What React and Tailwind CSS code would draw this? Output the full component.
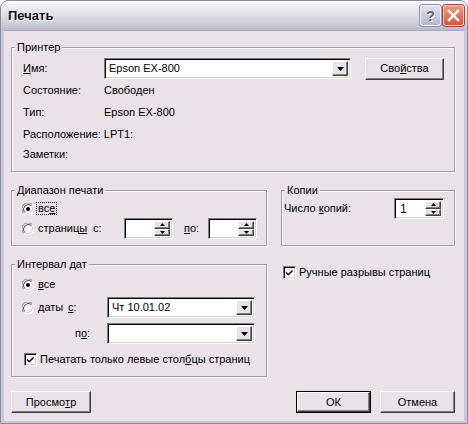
import React from "react";

// classic win-style bevels
const raised =
  "border border-t-white border-l-white border-b-[#404040] border-r-[#404040] shadow-[inset_-1px_-1px_0_#808080]";
const sunken =
  "border border-t-[#808080] border-l-[#808080] border-b-white border-r-white shadow-[inset_1px_1px_0_#000,inset_-1px_-1px_0_#d4d0c8]";

const Radio = ({ checked }) => (
  <svg width="12" height="12" viewBox="0 0 12 12" className="shrink-0">
    <circle cx="6" cy="6" r="5.5" fill="#fff" />
    <path d="M1.6 10.4 A6 6 0 0 1 10.4 1.6" fill="none" stroke="#808080" />
    <path d="M10.4 1.6 A6 6 0 0 1 1.6 10.4" fill="none" stroke="#fff" />
    <path d="M2.5 9.5 A5 5 0 0 1 9.5 2.5" fill="none" stroke="#404040" />
    <path d="M9.5 2.5 A5 5 0 0 1 2.5 9.5" fill="none" stroke="#d4d0c8" />
    {checked && <circle cx="6" cy="6" r="2" fill="#000" />}
  </svg>
);

const Check = () => (
  <div className={"w-[13px] h-[13px] shrink-0 bg-white " + sunken}>
    <svg width="11" height="11" viewBox="0 0 11 11">
      <path d="M2 4.5 L4.2 6.8 L8.6 2.4 L8.6 4.4 L4.2 8.8 L2 6.5 Z" fill="#000" />
    </svg>
  </div>
);

const Arrow = ({ up, small }) => (
  <svg width={small ? 5 : 7} height={small ? 3 : 4} viewBox={small ? "0 0 5 3" : "0 0 7 4"}>
    {small ? (
      <path d={up ? "M2.5 0 L5 3 L0 3 Z" : "M0 0 L5 0 L2.5 3 Z"} fill="#000" />
    ) : (
      <path d="M0 0 L7 0 L3.5 4 Z" fill="#000" />
    )}
  </svg>
);

const Combo = ({ value, w }) => (
  <div className={"h-[21px] flex items-stretch bg-white p-[2px] " + sunken + " " + w}>
    <div className="flex-1 flex items-center pl-[2px] leading-[13px]">{value}</div>
    <div className={"w-[16px] bg-[#e9e2e9] flex items-center justify-center " + raised}>
      <Arrow />
    </div>
  </div>
);

const Spin = ({ value, w }) => (
  <div className={"h-[21px] flex items-stretch bg-white p-[2px] " + sunken + " " + w}>
    <div className="flex-1 flex items-center pl-[3px] text-[12px] leading-[14px]">{value}</div>
    <div className="w-[16px] flex flex-col">
      <div className={"flex-1 bg-[#e9e2e9] flex items-center justify-center " + raised}>
        <Arrow up small />
      </div>
      <div className={"flex-1 bg-[#e9e2e9] flex items-center justify-center " + raised}>
        <Arrow small />
      </div>
    </div>
  </div>
);

const Button = ({ children, w, def }) =>
  def ? (
    <div className={"h-[22px] border border-black " + w}>
      <div className={"h-full flex items-center justify-center bg-[#e9e2e9] " + raised}>{children}</div>
    </div>
  ) : (
    <div className={"h-[22px] flex items-center justify-center bg-[#e9e2e9] " + raised + " " + w}>{children}</div>
  );

const Group = ({ label, className, children }) => (
  <fieldset className={"min-w-0 p-0 m-0 border border-[#9d9da1] shadow-[1px_1px_0_#fff,inset_1px_1px_0_#fff] " + className}>
    <legend className="ml-[3px] px-[2px] leading-[13px] bg-[#e9e2e9]">{label}</legend>
    {children}
  </fieldset>
);

export default function App() {
  return (
    <div className="w-[468px] h-[424px] flex flex-col border border-[#8b8ba0] rounded-t-[8px] overflow-hidden bg-[#c9c9d5] font-['Liberation_Sans',Arial,sans-serif] text-[11px] text-black">
      {/* TITLE BAR */}
      <div className="h-[29px] shrink-0 flex items-center pl-[7px] pr-[3px] bg-[linear-gradient(to_bottom,#ffffff_0%,#ececf2_20%,#dedee7_50%,#cdcdd9_80%,#b9b9c8_100%)]">
        <span className="font-bold text-[13px] text-[#111] [text-shadow:1px_1px_0_#fff]">Печать</span>
        <div className="ml-auto flex gap-[2px]">
          <div className="w-[21px] h-[21px] rounded-[3px] border border-[#f4f4f8] bg-[linear-gradient(to_bottom,#e2e5ef,#b3b8cd)] shadow-[0_0_0_1px_#8e93a9] flex items-center justify-center">
            <span className="font-bold text-[14px] leading-none text-[#5a5e72] [text-shadow:1px_1px_0_#fff]">?</span>
          </div>
          <div className="w-[21px] h-[21px] rounded-[3px] border border-[#f3c5b8] bg-[linear-gradient(to_bottom,#ee9a84,#d5573e)] shadow-[0_0_0_1px_#a04536] flex items-center justify-center">
            <svg width="13" height="13" viewBox="0 0 13 13">
              <path d="M2 2 L11 11 M11 2 L2 11" stroke="#fff" strokeWidth="2.4" strokeLinecap="square" />
            </svg>
          </div>
        </div>
      </div>

      {/* BODY */}
      <div className="flex-1 mx-[3px] mb-[2px] bg-[#e9e2e9] border-t border-[#a8a8b8] pl-[7px] pr-[9px] pt-[10px] flex flex-col">
        <Group label="Принтер" className="h-[131px]">
          <div className="pl-[11px] pr-[10px] pt-[4px] flex flex-col">
            <div className="h-[21px] flex items-center">
              <span className="w-[81px]"><u>И</u>мя:</span>
              <Combo value="Epson EX-800" w="w-[247px]" />
              <div className="ml-[14px]">
                <Button w="w-[79px]">Сво<u>й</u>ства</Button>
              </div>
            </div>
            <div className="mt-[5px] h-[13px] flex items-center leading-[13px]">
              <span className="w-[81px]">Состояние:</span>
              <span>Свободен</span>
            </div>
            <div className="mt-[9px] h-[13px] flex items-center leading-[13px]">
              <span className="w-[81px]">Тип:</span>
              <span>Epson EX-800</span>
            </div>
            <div className="mt-[9px] h-[13px] flex items-center leading-[13px]">
              <span className="shrink-0 pr-[3px]">Расположение:</span>
              <span>LPT1:</span>
            </div>
            <div className="mt-[7px] h-[13px] flex items-center leading-[13px]">
              <span>Заметки:</span>
            </div>
          </div>
        </Group>

        {/* RANGE + COPIES */}
        <div className="mt-[12px] flex gap-[14px]">
          <Group label="Диапазон печати" className="w-[256px] h-[62px]">
            <div className="pl-[10px] pt-[5px] flex flex-col">
              <div className="h-[13px] flex items-center gap-[2px]">
                <Radio checked />
                <span className="px-[1px] leading-[11px] border border-dotted border-black">вс<u>е</u></span>
              </div>
              <div className="mt-[3px] h-[21px] flex items-center">
                <div className="w-[71px] flex items-center gap-[4px]">
                  <Radio />
                  <span>страниц<u>ы</u></span>
                </div>
                <span className="w-[31px]">с:</span>
                <Spin value="" w="w-[49px]" />
                <span className="ml-[11px] w-[24px]"><u>п</u>о:</span>
                <Spin value="" w="w-[49px]" />
              </div>
            </div>
          </Group>
          <Group label="Копии" className="w-[174px] h-[62px]">
            <div className="pl-[2px] pt-[1px]">
              <div className="h-[21px] flex items-center">
                <span className="w-[110px]">Число <u>к</u>опий:</span>
                <Spin value="1" w="w-[50px]" />
              </div>
            </div>
          </Group>
        </div>

        {/* DATE RANGE + MANUAL BREAKS */}
        <div className="mt-[12px] flex gap-[14px]">
          <Group label="Интервал дат" className="w-[256px] h-[119px]">
            <div className="pl-[10px] pt-[7px] flex flex-col">
              <div className="h-[13px] flex items-center gap-[4px]">
                <Radio checked />
                <span><u>в</u>се</span>
              </div>
              <div className="mt-[6px] h-[21px] flex items-center">
                <div className="w-[46px] flex items-center gap-[4px]">
                  <Radio />
                  <span>даты</span>
                </div>
                <span className="w-[39px]"><u>с</u>:</span>
                <Combo value="Чт 10.01.02" w="w-[148px]" />
              </div>
              <div className="mt-[5px] h-[21px] flex items-center">
                <span className="ml-[53px] w-[32px]">п<u>о</u>:</span>
                <Combo value="" w="w-[148px]" />
              </div>
              <div className="mt-[9px] h-[13px] flex items-center gap-[3px] pl-[2px]">
                <Check />
                <span>Печатать только левые стол<u>б</u>цы страниц</span>
              </div>
            </div>
          </Group>
          <div className="pl-[2px] pt-[8px]">
            <div className="h-[13px] flex items-center gap-[3px]">
              <Check />
              <span>Ручные разрывы страниц</span>
            </div>
          </div>
        </div>

        {/* BUTTONS */}
        <div className="mt-[14px] flex">
          <Button w="w-[80px]">Просмо<u>т</u>р</Button>
          <div className="ml-auto flex gap-[9px]">
            <Button w="w-[75px]" def>ОК</Button>
            <Button w="w-[75px]">Отмена</Button>
          </div>
        </div>
      </div>
    </div>
  );
}
